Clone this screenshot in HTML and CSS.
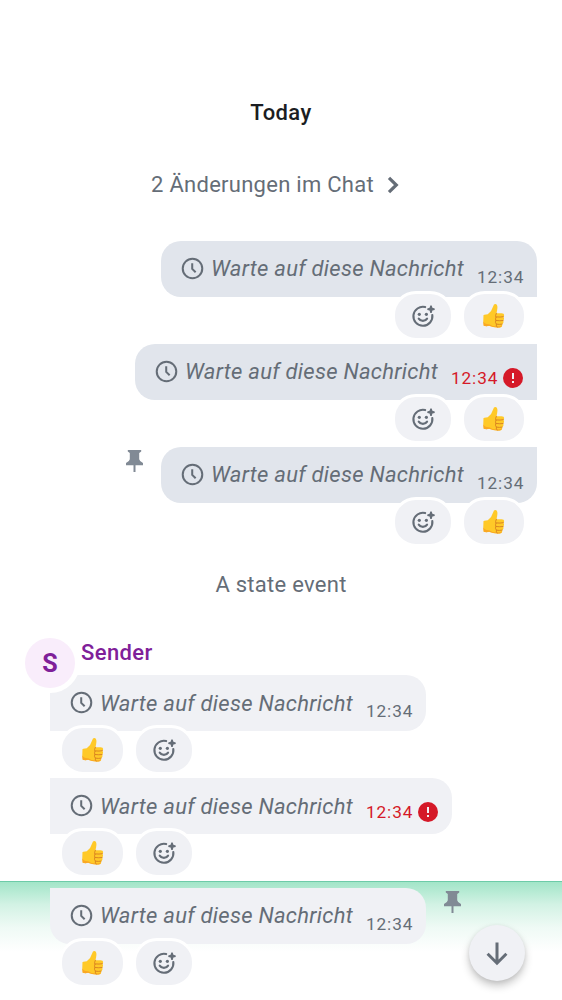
FILE: index.html
```html
<!DOCTYPE html>
<html lang="de">
<head>
<meta charset="utf-8">
<title>Chat</title>
<link rel="stylesheet" href="styles.css">
</head>
<body>
<svg class="sprite" aria-hidden="true">
  <symbol id="clock" viewBox="0 0 24 24"><circle cx="12" cy="12" r="10.2"/><path d="M11.700 6.500v5.900l3.600 3.600"/></symbol>
  <symbol id="react" viewBox="0 0 24 24">
    <path class="line" d="M14.200 3.100A9.500 9.500 0 1 0 21.300 11"/>
    <path class="line" d="M7.700 14.600q1.500 2.300 4.200 2.300t4.200-2.300"/>
    <circle cx="8.300" cy="10.300" r="1.600"/><circle cx="15.400" cy="10.300" r="1.600"/>
    <path d="M19.300 1.500h1.400l.700 2.300 2.300.700v1.400l-2.300.700-.700 2.300h-1.400l-.700-2.300-2.300-.700V4.500l2.300-.700z"/>
  </symbol>
  <symbol id="thumb" viewBox="0 0 24 26">
    <path fill="#ffc928" d="M1.500 13.500Q1 12 2.500 11.700L6 11.300Q10.500 7.500 11.800 2.500Q12.200.600 13.800.500Q16.300.800 16.100 4.500Q16 7.500 14.900 10H20.500Q23.300 10.200 23.100 12Q23.100 13 22.200 13.700Q23.500 15 22.900 16.400Q22.600 17.300 22 17.700Q22.900 19 22.200 20.400Q21.700 21.200 21 21.500Q21.600 24.500 18.500 25Q12 25.500 7.500 23.200Q4.500 24 1.800 23.200Q1 18 1.500 13.500Z"/>
    <path fill="#faa825" d="M1.200 18.500Q3 21.800 7.500 21.500Q12 24.700 19.500 23.500L21 22.500Q20.800 24.700 18.500 25Q12 25.500 7.500 23.200Q4.500 24 1.800 23.200Z"/>
    <path fill="none" stroke="#d88420" stroke-width="1" stroke-linecap="round" d="M15 10Q13.600 12.500 14.300 14.300M15 14Q19 14.400 22.300 13.700M14.500 17.700Q19 18.300 22 17.700M15 21.500Q18 22.100 21 21.500M14.600 14.500Q13.500 16 14.500 17.600Q13.300 19.500 15 21.500Q14.300 23.500 16 24.700"/>
  </symbol>
  <symbol id="pin" viewBox="0 0 17 23"><path d="M1.800 0h13.400v1.600L13.200 3v6.200q.4 2.300 3.800 3.800v2.300H9.500V22h-2v-6.700H0V13q3.400-1.500 3.800-3.800V3l-2-1.400z"/></symbol>
  <symbol id="error" viewBox="0 0 20 20"><circle cx="10" cy="10" r="10"/><path class="mark" d="M9 5h2v6H9zM9 13h2v2H9z"/></symbol>
  <symbol id="chevron" viewBox="0 0 12 18"><path d="M2 1.800 9.300 9 2 16.200"/></symbol>
  <symbol id="arrow" viewBox="0 0 24 26"><path d="M12 2.400v21M2.600 13.700l9.400 9.500 9.400-9.500"/></symbol>
</svg>

<main class="timeline">
  <h1 class="day">Today</h1>
  <div class="changes">2 Änderungen im Chat<svg class="chevron"><use href="#chevron"/></svg></div>

  <section class="group outgoing">
    <article class="message">
      <div class="bubble first"><svg class="clock"><use href="#clock"/></svg><em>Warte auf diese Nachricht</em><time>12:34</time></div>
      <div class="reactions"><span class="chip add"><svg class="react"><use href="#react"/></svg></span><span class="chip"><svg class="thumb"><use href="#thumb"/></svg></span></div>
    </article>
    <article class="message">
      <div class="bubble failed"><svg class="clock"><use href="#clock"/></svg><em>Warte auf diese Nachricht</em><time>12:34</time><svg class="error"><use href="#error"/></svg></div>
      <div class="reactions"><span class="chip add"><svg class="react"><use href="#react"/></svg></span><span class="chip"><svg class="thumb"><use href="#thumb"/></svg></span></div>
    </article>
    <article class="message">
      <div class="line-row"><svg class="pin"><use href="#pin"/></svg><div class="bubble last"><svg class="clock"><use href="#clock"/></svg><em>Warte auf diese Nachricht</em><time>12:34</time></div></div>
      <div class="reactions"><span class="chip add"><svg class="react"><use href="#react"/></svg></span><span class="chip"><svg class="thumb"><use href="#thumb"/></svg></span></div>
    </article>
  </section>

  <div class="state">A state event</div>

  <section class="group incoming">
    <header class="sender"><span class="avatar">S</span><span class="name">Sender</span></header>
    <article class="message">
      <div class="bubble first"><svg class="clock"><use href="#clock"/></svg><em>Warte auf diese Nachricht</em><time>12:34</time></div>
      <div class="reactions"><span class="chip"><svg class="thumb"><use href="#thumb"/></svg></span><span class="chip add"><svg class="react"><use href="#react"/></svg></span></div>
    </article>
    <article class="message">
      <div class="bubble failed"><svg class="clock"><use href="#clock"/></svg><em>Warte auf diese Nachricht</em><time>12:34</time><svg class="error"><use href="#error"/></svg></div>
      <div class="reactions"><span class="chip"><svg class="thumb"><use href="#thumb"/></svg></span><span class="chip add"><svg class="react"><use href="#react"/></svg></span></div>
    </article>
    <article class="message focused">
      <div class="line-row"><div class="bubble last"><svg class="clock"><use href="#clock"/></svg><em>Warte auf diese Nachricht</em><time>12:34</time></div><svg class="pin"><use href="#pin"/></svg></div>
      <div class="reactions"><span class="chip"><svg class="thumb"><use href="#thumb"/></svg></span><span class="chip add"><svg class="react"><use href="#react"/></svg></span></div>
    </article>
  </section>
</main>
<button class="jump" aria-label="Nach unten"><svg><use href="#arrow"/></svg></button>
</body>
</html>
```
FILE: styles.css
```css
* { box-sizing: border-box; }
body {
  margin: 0;
  height: 1000px;
  overflow: hidden;
  background: #fff;
  color: #656d77;
  font: 22px/32px Roboto, sans-serif;
  letter-spacing: 0.27px;
}
svg { display: block; flex: none; fill: currentColor; }
.sprite { position: absolute; width: 0; height: 0; }
.timeline { display: flex; flex-direction: column; padding-top: 97px; }
.day { margin: 0; text-align: center; font-size: 22px; line-height: 32px; font-weight: 500; letter-spacing: 0.4px; color: #1b1d22; }
.changes { display: flex; justify-content: center; align-items: center; gap: 13px; margin-top: 40px; padding-right: 12px; }
.chevron { width: 12px; height: 18px; fill: none; stroke: currentColor; stroke-width: 3.2; }
.group { display: flex; flex-direction: column; }
.outgoing { margin-top: 40px; padding-right: 25px; }
.message { display: flex; flex-direction: column; height: 103px; }
.outgoing .message { align-items: flex-end; }
.incoming .message { align-items: flex-start; padding-left: 50px; }
.line-row { display: flex; align-items: flex-start; gap: 18px; }
.bubble {
  display: flex;
  align-items: center;
  width: 376px;
  height: 56px;
  padding: 0 14px 0 20px;
  background: #e1e5ec;
}
.incoming .bubble { background: #f0f1f5; }
.bubble.failed { width: 402px; }
.outgoing .bubble { border-radius: 20px 0 0 20px; }
.outgoing .first { border-top-right-radius: 20px; }
.outgoing .last { border-bottom-right-radius: 20px; }
.incoming .bubble { border-radius: 0 20px 20px 0; }
.incoming .last { border-bottom-left-radius: 20px; }
.bubble em { margin-left: 7px; width: 254px; white-space: nowrap; }
.bubble time { margin: 15px 0 0 12px; width: 46px; font-size: 17.2px; line-height: 24px; letter-spacing: 0.9px; white-space: nowrap; }
.bubble:not(.failed) time { margin-left: 12.500px; }
.failed time { margin-top: 12px; color: #d51928; }
.clock { width: 23px; height: 23px; margin-top: -0.500px; fill: none; stroke: currentColor; stroke-width: 2.1; }
.error { width: 20px; height: 20px; margin: 12px 0 0 auto; color: #d51928; }
.mark { fill: #f0f1f5; }
.pin { width: 17px; height: 23px; margin-top: 3px; color: #818a95; }
.reactions { display: flex; gap: 7px; margin-top: -6.500px; }
.outgoing .reactions { padding-right: 10px; }
.incoming .reactions { padding-left: 9.300px; }
.chip {
  display: flex;
  align-items: center;
  justify-content: center;
  width: 66.500px;
  height: 50px;
  border: 3px solid #fff;
  border-radius: 24px;
  background: #f0f1f5;
}
.chip.add { width: 62px; }
.react { width: 24px; height: 24px; }
.line { fill: none; stroke: currentColor; stroke-width: 2.1; stroke-linecap: round; }
.thumb { width: 23px; height: 26px; }
.state { margin-top: 19px; text-align: center; }
.sender { display: flex; gap: 1px; height: 41px; margin-top: 33px; padding-left: 20px; color: #7f2099; }
.avatar {
  z-index: 1;
  flex: none;
  width: 60px;
  height: 60px;
  margin-top: -1px;
  border: 5px solid #fff;
  border-radius: 50%;
  background: #f9edfb;
  font-size: 25px;
  font-weight: 700;
  line-height: 51px;
  letter-spacing: 0;
  text-align: center;
}
.name { margin-top: 3px; font-weight: 500; letter-spacing: 0.4px; }
.incoming em { padding-top: 1px; }
.focused {
  height: 120px;
  padding-top: 6px;
  border-top: 1px solid #6dcba8;
  background: linear-gradient(#a2e5c8, #d2f2e4 32%, #effaf5 65%, #fff) 0 0 / 100% 70px no-repeat;
}
.focused em { padding-top: 0; }
.jump {
  position: absolute;
  left: 468.500px;
  top: 925px;
  display: flex;
  align-items: center;
  justify-content: center;
  width: 56px;
  height: 56px;
  padding: 0;
  border: 0;
  border-radius: 50%;
  background: #f0f1f5;
  color: #656d77;
  box-shadow: 0 5px 9px rgba(0, 0, 0, 0.22), 0 1px 4px rgba(0, 0, 0, 0.08);
}
.jump svg { width: 24px; height: 26px; fill: none; stroke: currentColor; stroke-width: 3; stroke-linecap: butt; }
```
